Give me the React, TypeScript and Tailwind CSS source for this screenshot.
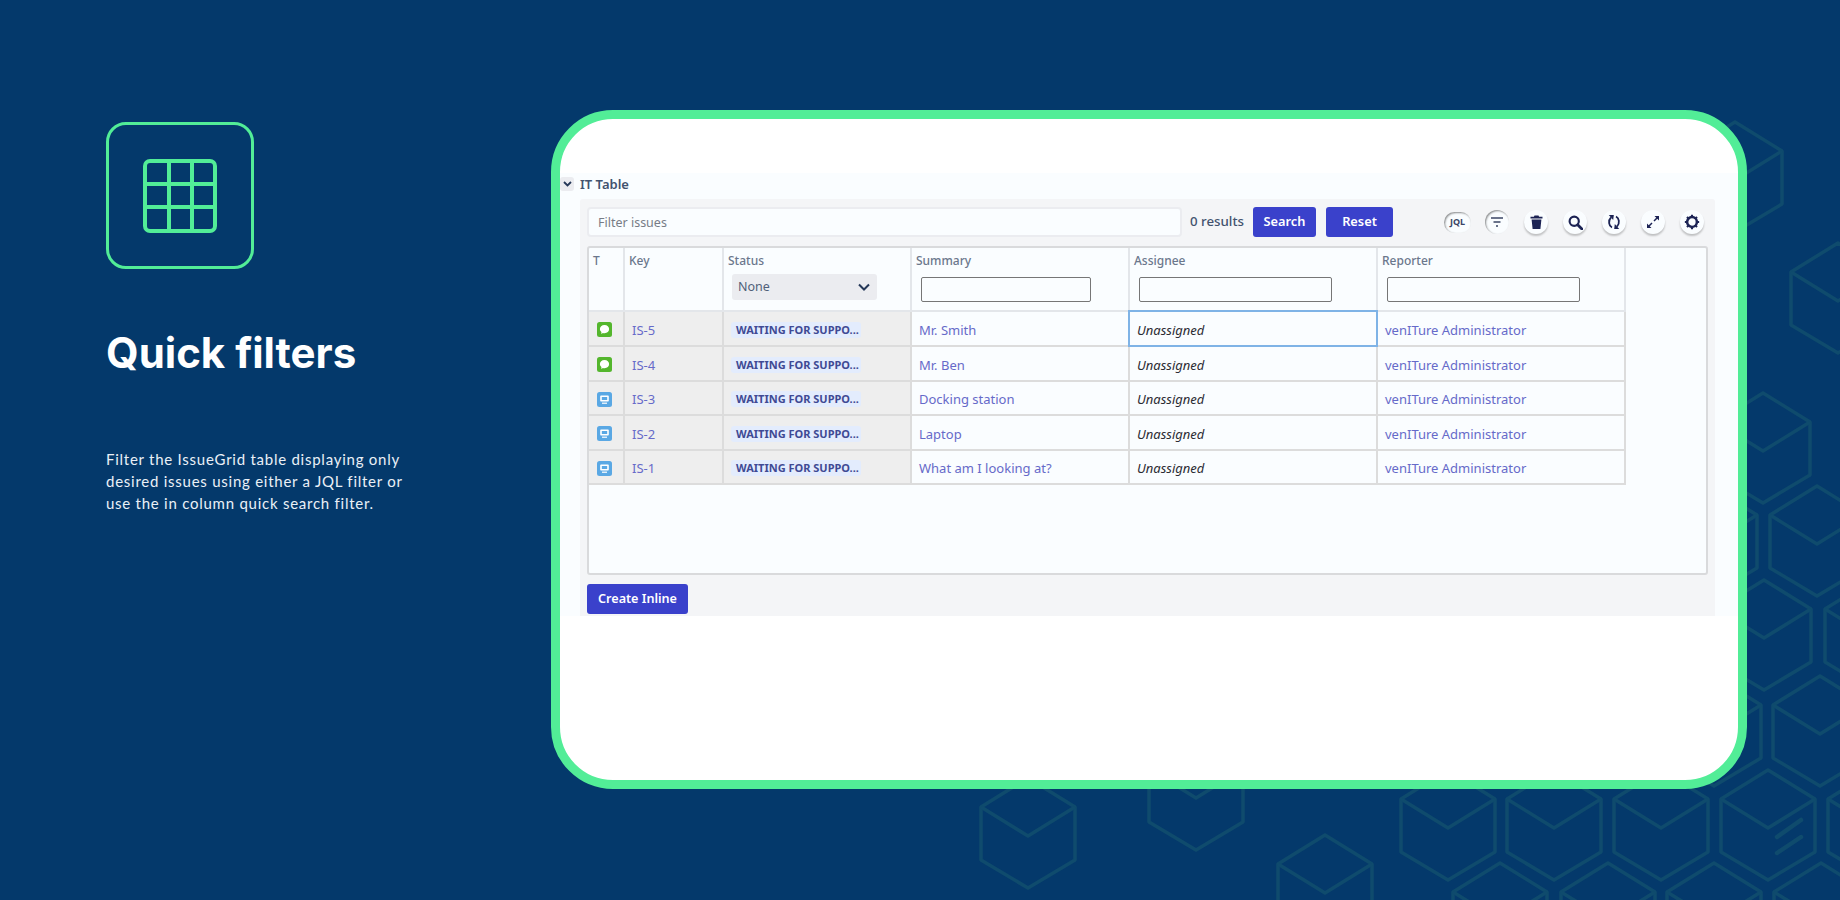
import { ReactNode } from 'react'

const body = 'font-["Noto_Sans",sans-serif]'

// x, top of each background cube
const cubes = [
  [1028, 778], [1196, 740], [1325, 835], [1448, 770], [1554, 770], [1661, 770], [1768, 770], [1875, 770],
  [1500, 863], [1608, 863], [1714, 863], [1821, 863], [1735, 122], [1838, 243], [1763, 393], [1817, 486],
  [1710, 486], [1764, 580], [1872, 580], [1820, 676], [1714, 676],
]

function Backdrop() {
  return (
    <svg className="absolute inset-0" width="1840" height="900" fill="none" stroke="#0f4b6d" strokeWidth="3.5" strokeLinejoin="round">
      {cubes.map(([x, y]) => (
        <g key={`${x}-${y}`}>
          <path d={`M${x} ${y}l47 29v53l-47 28l-47 -28v-53z`} />
          <path d={`M${x - 47} ${y + 29}l47 29l47 -29`} />
        </g>
      ))}
      <path d="M1777 837l24-17M1777 853l24-16" strokeLinecap="round" strokeWidth="4.5" />
    </svg>
  )
}

function GridMark() {
  return (
    <svg width="74" height="74" viewBox="0 0 74 74" fill="none" stroke="#52ed97" strokeWidth="4">
      <rect x="2" y="2" width="70" height="70" rx="5" />
      <path d="M26 2v70M49 2v70M2 25h70M2 48h70" />
    </svg>
  )
}

function IconButton({ children }: { children: ReactNode }) {
  return (
    <button className="flex h-[24px] w-[24px] items-center justify-center rounded-full bg-[#fafdff] text-[#1d2455] shadow-[0_2px_2px_rgba(0,0,0,0.22)]">
      {children}
    </button>
  )
}

function Toolbar() {
  return (
    <div className="ml-[12px] flex items-center">
      <button className="flex h-[21px] w-[27px] items-center justify-center rounded-full bg-[#fafdff] text-[9px] font-bold text-[#3b4565] shadow-[inset_1px_1px_2px_rgba(0,0,0,0.45)]">
        JQL
      </button>
      <button className="ml-[14px] flex h-[24px] w-[24px] items-center justify-center rounded-full bg-[#fafdff] text-[#3b4565] shadow-[inset_1px_1px_2px_rgba(0,0,0,0.45)]">
        <svg width="14" height="12" viewBox="0 0 14 12" fill="none" stroke="currentColor" strokeWidth="1.4">
          <path d="M1 2h12M3.500 6h7M6 10h2" />
        </svg>
      </button>
      <div className="ml-[15px] flex gap-[15px]">
        <IconButton>
          <svg width="13" height="14" viewBox="0 0 13 14" fill="currentColor">
            <path d="M4.500 0.500h4l0.600 1.200h3.400v1.800h-12v-1.800h3.400zM1.600 4.600h9.800l-1 9.400h-7.800z" />
          </svg>
        </IconButton>
        <IconButton>
          <svg width="15" height="15" viewBox="0 0 14 14" fill="none" stroke="currentColor">
            <circle cx="5.800" cy="5.800" r="4.300" strokeWidth="2" />
            <path d="M9 9l4 4" strokeWidth="2.600" strokeLinecap="round" />
          </svg>
        </IconButton>
        <IconButton>
          <svg width="14" height="16" viewBox="0 0 14 16" fill="none" stroke="currentColor" strokeWidth="1.800">
            <g id="half">
              <path d="M5 13.500C1.800 12 .9 6.500 4 3.500" />
              <path d="M1.800 1h5l-.6 5z" fill="currentColor" stroke="none" />
            </g>
            <g transform="rotate(180 7 8)">
              <path d="M5 13.500C1.800 12 .9 6.500 4 3.500" />
              <path d="M1.800 1h5l-.6 5z" fill="currentColor" stroke="none" />
            </g>
          </svg>
        </IconButton>
        <IconButton>
          <svg width="14" height="14" viewBox="0 0 14 14" fill="none" stroke="currentColor" strokeWidth="1.500">
            <path d="M8 6l3.500-3.500M2.500 11.500L6 8" />
            <path d="M8.500 1h4.500v4.500zM5.500 13H1V8.500z" fill="currentColor" stroke="none" />
          </svg>
        </IconButton>
        <IconButton>
          <svg width="16" height="16" viewBox="0 0 15 15" fill="none" stroke="currentColor">
            <circle cx="7.500" cy="7.500" r="4.600" strokeWidth="2.400" />
            <path d="M7.500 .8v2M7.500 12.200v2M.8 7.500h2M12.200 7.500h2M2.800 2.800l1.400 1.400M10.800 10.800l1.400 1.400M12.200 2.800l-1.400 1.400M4.200 10.800l-1.400 1.400" strokeWidth="2" />
          </svg>
        </IconButton>
      </div>
    </div>
  )
}

function IssueIcon({ type }: { type: 'chat' | 'screen' }) {
  if (type === 'chat') {
    return (
      <svg className="block" width="15" height="15" viewBox="0 0 15 15">
        <rect width="15" height="15" rx="2.500" fill="#54b62d" />
        <path d="M7.500 3c2.800 0 4.600 1.700 4.600 4.100s-1.800 4.100-4.600 4.100c-.6 0-1.100 0-1.600-.2l-1.600 1 .1-1.900C3.500 9.300 2.900 8.300 2.900 7.100 2.900 4.700 4.700 3 7.500 3z" fill="#fff" />
      </svg>
    )
  }
  return (
    <svg className="block" width="15" height="15" viewBox="0 0 15 15">
      <rect width="15" height="15" rx="2.500" fill="#5aa8e4" />
      <path d="M4 3.500h7a.8.8 0 0 1 .8.8v4.400a.8.8 0 0 1-.8.800H4a.8.8 0 0 1-.8-.8V4.300a.8.8 0 0 1 .8-.8z" fill="#fff" />
      <path d="M4.800 5h5.400v3H4.800z" fill="#5aa8e4" />
      <path d="M5 10.600h5v1.200H5z" fill="#fff" />
    </svg>
  )
}

const rows: { key: string; summary: string; type: 'chat' | 'screen'; h: string }[] = [
  { key: 'IS-5', summary: 'Mr. Smith', type: 'chat', h: 'h-[35px]' },
  { key: 'IS-4', summary: 'Mr. Ben', type: 'chat', h: 'h-[35px]' },
  { key: 'IS-3', summary: 'Docking station', type: 'screen', h: 'h-[34px]' },
  { key: 'IS-2', summary: 'Laptop', type: 'screen', h: 'h-[35px]' },
  { key: 'IS-1', summary: 'What am I looking at?', type: 'screen', h: 'h-[34px]' },
]

const th = 'border-2 border-t-0 border-[#e3e6ea] px-[4px] pt-[4px] align-top text-left text-[12px] font-medium text-[#6b778c]'
const td = 'border-2 border-[#dcdcdc] px-[7px] pt-[2px] text-[13px] leading-[20px]'

function IssueTable() {
  return (
    <div className="mt-[9px] h-[329px] w-[1121px] rounded-[3px] border-2 border-[#d9dadc] bg-[#fafdff]">
      <table className="w-[1036px] table-fixed border-collapse">
        <colgroup>
          <col className="w-[35px]" />
          <col className="w-[99px]" />
          <col className="w-[188px]" />
          <col className="w-[218px]" />
          <col className="w-[248px]" />
          <col className="w-[248px]" />
        </colgroup>
        <thead>
          <tr className="h-[63px]">
            <th className={`${th} border-l-0`}>T</th>
            <th className={th}>Key</th>
            <th className={th}>
              Status
              <div className="ml-[4px] mt-[4px] flex h-[26px] w-[145px] items-center justify-between rounded-[3px] bg-[#ebecf0] pl-[6px] pr-[7px] text-[12.500px] font-normal text-[#505f79]">
                None
                <svg width="12" height="8" viewBox="0 0 12 8" fill="none" stroke="#253858" strokeWidth="2">
                  <path d="M1 1.500l5 5 5-5" />
                </svg>
              </div>
            </th>
            {['Summary', 'Assignee', 'Reporter'].map((name, i) => (
              <th key={name} className={th}>
                {name}
                <input className={`ml-[5px] mt-[7px] block h-[25px] rounded-[2px] border-[1.500px] border-[#767676] bg-[#fafdff] ${i === 0 ? 'w-[170px]' : 'w-[193px]'}`} />
              </th>
            ))}
          </tr>
        </thead>
        <tbody>
          {rows.map((r, i) => (
            <tr key={r.key} className={r.h}>
              <td className={`${td} border-l-0 bg-[#eeeeee] pl-[8px]`}>
                <IssueIcon type={r.type} />
              </td>
              <td className={`${td} bg-[#eeeeee] text-[13.500px] text-[#666ac9]`}>{r.key}</td>
              <td className={`${td} bg-[#eeeeee]`}>
                <span className="block h-[16px] w-[130px] rounded-[3px] bg-[#e3ecfd] pl-[5px] text-[11px] font-bold leading-[16px] whitespace-nowrap text-[#3f4a94]">
                  WAITING FOR SUPPO...
                </span>
              </td>
              <td className={`${td} text-[#666ac9]`}>{r.summary}</td>
              <td className={`${td} italic text-[#2b2b33] ${i === 0 ? 'outline-2 -outline-offset-1 outline-[#7fb3e6]' : ''}`}>Unassigned</td>
              <td className={`${td} text-[#666ac9]`}>venITure Administrator</td>
            </tr>
          ))}
        </tbody>
      </table>
    </div>
  )
}

export default function App() {
  return (
    <div className="relative flex h-[900px] w-[1840px] overflow-hidden bg-[#04396b]">
      <Backdrop />

      <div className="relative w-[551px] pl-[106px] pt-[122px]">
        <div className="flex h-[147px] w-[148px] items-center justify-center rounded-[20px] border-[3px] border-[#52ed97]">
          <GridMark />
        </div>
        <h1 className='mt-[60px] font-["Inter",sans-serif] text-[42px] leading-[48px] font-bold text-white'>Quick filters</h1>
        <p className='mt-[71px] w-[320px] font-["Lato",sans-serif] text-[15px] leading-[22px] tracking-[0.75px] text-[#eaf0f7]'>
          Filter the IssueGrid table displaying only desired issues using either a JQL filter or use the in column quick search filter.
        </p>
      </div>

      <div className={`relative mt-[110px] h-[679px] w-[1196px] overflow-hidden rounded-[62px] border-[9px] border-[#52ed97] bg-white pt-[54px] ${body}`}>
        <div className="h-[443px] bg-[#fafdff]">
          <div className="flex h-[26px] items-start">
            <span className="mt-[4px] flex h-[14px] w-[14px] items-center justify-center rounded-[3px] bg-[#ebecf0]">
              <svg width="9" height="6" viewBox="0 0 9 6" fill="none" stroke="#253858" strokeWidth="1.800">
                <path d="M1 1l3.500 3.500L8 1" />
              </svg>
            </span>
            <span className="ml-[6px] text-[13px] leading-[22px] font-semibold text-[#42526e]">IT Table</span>
          </div>

          <div className="ml-[20px] h-[417px] w-[1135px] rounded-t-[3px] bg-[#f4f5f7] px-[7px] pt-[8px]">
            <div className="flex h-[30px] items-center">
              <input
                placeholder="Filter issues"
                className="h-[30px] w-[595px] rounded-[4px] border-2 border-[#ebecf0] bg-[#fafdff] px-[9px] text-[12.500px] placeholder:text-[#777c86]"
              />
              <span className="ml-[8px] w-[63px] text-[13.300px] font-medium whitespace-nowrap text-[#42526e]">0 results</span>
              <button className="h-[30px] w-[63px] rounded-[3px] bg-[#3a41cb] text-[12.800px] font-semibold text-white">Search</button>
              <button className="ml-[10px] h-[30px] w-[67px] rounded-[3px] bg-[#3a41cb] text-[12.800px] font-semibold text-white">Reset</button>
              <div className="ml-[39px]">
                <Toolbar />
              </div>
            </div>

            <IssueTable />

            <button className="mt-[9px] block h-[30px] w-[101px] rounded-[3px] bg-[#3a41cb] text-[12.600px] font-semibold text-white">Create Inline</button>
          </div>
        </div>
      </div>
    </div>
  )
}
